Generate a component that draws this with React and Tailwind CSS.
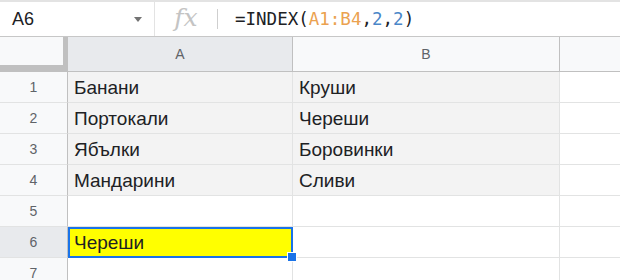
const rows = [
  ['Банани', 'Круши'],
  ['Портокали', 'Череши'],
  ['Ябълки', 'Боровинки'],
  ['Мандарини', 'Сливи'],
  ['', ''],
  ['Череши', ''],
  ['', ''],
];

function RowHeader({ n, active }) {
  return (
    <div
      className={`flex items-center justify-center border-r border-b border-r-[#c0c0c0] border-b-[#e2e3e3] text-[14px] text-[#5f6368] ${
        active ? 'bg-[#e8eaed]' : 'bg-[#f8f9fa]'
      }`}
    >
      {n}
    </div>
  );
}

export default function App() {
  return (
    <div className="w-[620px] h-[280px] overflow-hidden bg-white font-['Liberation_Sans',Arial,sans-serif] text-[#202124]">
      {/* Formula bar */}
      <div className="flex h-[37px] border-t-2 border-b border-t-[#e3e3e3] border-b-[#c7c7c7] bg-white">
        <div className="flex w-[155px] items-center justify-between border-r border-[#e3e3e3] pl-3 pr-[12px]">
          <span className="text-[18px]">A6</span>
          <svg width="8" height="5" viewBox="0 0 8 5">
            <path d="M0 0h8L4 5z" fill="#737373" />
          </svg>
        </div>
        <div className="flex w-[62px] items-center justify-center">
          <span className="font-['DejaVu_Serif',serif] text-[25px] italic leading-none text-[#c4c4c4] -mt-1">fx</span>
        </div>
        <div className="my-[7px] w-px bg-[#cfcfcf]" />
        <div className="flex items-center pl-[17px] font-['DejaVu_Sans_Mono',monospace] text-[17.5px]">
          <span>=INDEX(</span>
          <span className="text-[#eba250]">A1:B4</span>
          <span>,</span>
          <span className="text-[#4a86c8]">2</span>
          <span>,</span>
          <span className="text-[#4a86c8]">2</span>
          <span>)</span>
        </div>
      </div>

      {/* Grid */}
      <div className="grid grid-cols-[68px_225px_267px_1fr] grid-rows-[35px_repeat(7,31px)]">
        {/* corner */}
        <div className="border-r-[5px] border-b-[7px] border-[#c0c0c0] bg-[#f8f9fa]" />
        <div className="flex items-center justify-center border-r border-b border-[#c0c0c0] bg-[#e8eaed] text-[14px] text-[#5f6368]">
          A
        </div>
        <div className="flex items-center justify-center border-r border-b border-[#c0c0c0] bg-[#f8f9fa] text-[14px] text-[#5f6368]">
          B
        </div>
        <div className="border-b border-[#c0c0c0] bg-[#f8f9fa]" />

        {rows.map(([a, b], i) => {
          const filled = i < 4;
          const selected = i === 5;
          return [
            <RowHeader key={`h${i}`} n={i + 1} active={selected} />,
            selected ? (
              <div key={`a${i}`} className="relative flex items-center border-2 border-[#1a73e8] bg-[#ffff00] pl-[4px] pt-[2px] text-[19px]">
                {a}
                <div className="absolute -right-[6px] -bottom-[6px] h-[10px] w-[10px] border border-white bg-[#1a73e8]" />
              </div>
            ) : (
              <div
                key={`a${i}`}
                className={`flex items-center border-r border-b border-[#e2e3e3] pl-[6px] pt-[2px] text-[19px] ${
                  filled ? 'bg-[#f3f3f3]' : 'bg-white'
                }`}
              >
                {a}
              </div>
            ),
            <div
              key={`b${i}`}
              className={`flex items-center border-r border-b border-[#e2e3e3] pl-[6px] pt-[2px] text-[19px] ${
                filled ? 'bg-[#f3f3f3]' : 'bg-white'
              }`}
            >
              {b}
            </div>,
            <div key={`c${i}`} className="border-b border-[#e2e3e3] bg-white" />,
          ];
        })}
      </div>
    </div>
  );
}
